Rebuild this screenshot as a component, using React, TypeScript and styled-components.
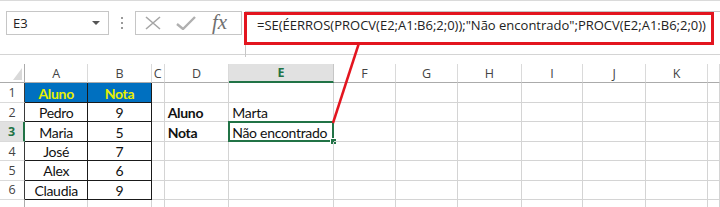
import React from "react";
import styled, { createGlobalStyle, css } from "styled-components";

const GlobalStyle = createGlobalStyle`
  html, body { margin: 0; padding: 0; background: #ffffff; }
  body { width: 720px; height: 207px; overflow: hidden; font-family: "Open Sans", "Noto Sans", sans-serif; }
`;

const Page = styled.div`
  position: relative;
  width: 720px;
  height: 207px;
  overflow: hidden;
  background: #ffffff;
  display: flex;
  flex-direction: column;
`;

const FormulaArea = styled.div`
  height: 55px;
  border-top: 1px solid #dadada;
  border-bottom: 1px solid #d4d4d4;
  box-sizing: border-box;
  display: flex;
  align-items: flex-start;
  padding: 10px 0 0 6px;
  flex-shrink: 0;
`;

const NameBox = styled.div`
  width: 103px;
  height: 24px;
  box-sizing: border-box;
  border: 1px solid #c6c6c6;
  display: flex;
  align-items: center;
  justify-content: space-between;
  padding: 0 8px 0 6px;
  font-family: "Open Sans", "Noto Sans", sans-serif;
  font-size: 13px;
  color: #222;
`;

const DropCaret = styled.span`
  width: 0;
  height: 0;
  border-left: 4px solid transparent;
  border-right: 4px solid transparent;
  border-top: 4px solid #555;
`;

const Grip = styled.div`
  width: 26px;
  height: 24px;
  display: flex;
  flex-direction: column;
  align-items: center;
  justify-content: center;
  gap: 3px;
  & > span {
    width: 2px;
    height: 2px;
    background: #9a9a9a;
  }
`;

const FxBox = styled.div`
  width: 107px;
  height: 24px;
  box-sizing: border-box;
  border: 1px solid #c6c6c6;
  display: flex;
  align-items: center;
  padding-left: 8px;
  gap: 14px;
`;

const FxLabel = styled.span`
  font-family: "Liberation Serif", "DejaVu Serif", serif;
  font-style: italic;
  font-size: 21px;
  color: #707070;
  line-height: 1;
  margin-left: 2px;
  margin-top: -2px;
`;

const FormulaBox = styled.div`
  margin-left: 3px;
  flex: 1;
  height: 46px;
  box-sizing: border-box;
  border: 1px solid #c6c6c6;
  border-right: none;
  border-bottom: none;
  position: relative;
  padding: 4px 0 0 11px;
  font-family: "Open Sans", "Noto Sans", sans-serif;
  font-size: 13px;
  color: #222;
  white-space: nowrap;
`;

const RedFrame = styled.div`
  position: absolute;
  left: -2px;
  top: 0px;
  width: 470px;
  height: 33px;
  box-sizing: border-box;
  border: 3px solid #e3151f;
  pointer-events: none;
`;

const Arrow = styled.svg`
  position: absolute;
  left: 0;
  top: 0;
  pointer-events: none;
`;

const Sheet = styled.div`
  padding-top: 9px;
  display: grid;
  grid-template-columns: 25px 63.3px 63.4px 13px 64.6px 104.7px 62px 62.3px 63.4px 61.6px 62.7px 62.3px 1fr;
  grid-template-rows: 19.3px 20px 19px 20px 19px 19.4px 19.3px 20px;
`;

const Corner = styled.div`
  border-right: 1px solid #ababab;
  border-bottom: 1px solid #ababab;
  display: flex;
  align-items: flex-end;
  justify-content: flex-end;
  padding: 0 2px 2px 0;
`;

const ColHeader = styled.div<{ $active?: boolean }>`
  box-sizing: border-box;
  border-right: 1px solid #dadada;
  border-bottom: 1px solid #ababab;
  display: flex;
  align-items: center;
  justify-content: center;
  font-family: "Open Sans", "Noto Sans", sans-serif;
  font-size: 12.5px;
  color: #444;
  ${(p) =>
    p.$active &&
    css`
      background: #e1e1e1;
      color: #217346;
      font-weight: 700;
      border-bottom: 2px solid #217346;
      border-right-color: #c6c6c6;
    `}
`;

const RowHeader = styled.div<{ $active?: boolean; $edge?: string }>`
  box-sizing: border-box;
  border-right: 1px solid ${(p) => p.$edge || "#ababab"};
  border-bottom: 1px solid #dadada;
  display: flex;
  align-items: center;
  justify-content: center;
  font-family: "Open Sans", "Noto Sans", sans-serif;
  font-size: 12.5px;
  color: #444;
  ${(p) =>
    p.$active &&
    css`
      background: #e1e1e1;
      color: #217346;
      font-weight: 700;
      border-right: 2px solid #217346;
    `}
`;

const Cell = styled.div<{
  $align?: "left" | "center";
  $bold?: boolean;
  $head?: boolean;
  $boxed?: boolean;
  $selected?: boolean;
}>`
  position: relative;
  box-sizing: border-box;
  border-right: 1px solid ${(p) => (p.$boxed ? "#1a1a1a" : "#d4d4d4")};
  border-bottom: 1px solid ${(p) => (p.$boxed ? "#1a1a1a" : "#d4d4d4")};
  display: flex;
  align-items: center;
  justify-content: ${(p) => (p.$align === "center" ? "center" : "flex-start")};
  padding: 1px 0 0 ${(p) => (p.$align === "center" ? "0" : "3px")};
  font-family: "Lato", "Liberation Sans", sans-serif;
  font-size: 14px;
  letter-spacing: -0.3px;
  font-weight: ${(p) => (p.$bold ? 700 : 400)};
  color: #111;
  white-space: nowrap;
  ${(p) =>
    p.$head &&
    css`
      background: #0070c0;
      color: #e8f000;
      font-weight: 700;
    `}
  ${(p) =>
    p.$selected &&
    css`
      &::before {
        content: "";
        position: absolute;
        left: -1px;
        top: -1px;
        right: -1px;
        bottom: -1px;
        border: 2px solid #217346;
      }
      &::after {
        content: "";
        position: absolute;
        right: -4px;
        bottom: -4px;
        width: 5px;
        height: 5px;
        background: #217346;
        border: 1px solid #fff;
      }
    `}
`;

const columns = ["A", "B", "C", "D", "E", "F", "G", "H", "I", "J", "K", ""];

type CellDef = { text?: string; align?: "left" | "center"; bold?: boolean; head?: boolean; boxed?: boolean; selected?: boolean };

const tableData: [string, string][] = [
  ["Aluno", "Nota"],
  ["Pedro", "9"],
  ["Maria", "5"],
  ["José", "7"],
  ["Alex", "6"],
  ["Claudia", "9"],
];

function rowCells(r: number): CellDef[] {
  const cells: CellDef[] = [];
  const t = tableData[r - 1];
  if (t) {
    cells.push({ text: t[0], align: "center", head: r === 1, boxed: true });
    cells.push({ text: t[1], align: "center", head: r === 1, boxed: true });
  } else {
    cells.push({}, {});
  }
  cells.push({});
  if (r === 2) {
    cells.push({ text: "Aluno", bold: true });
    cells.push({ text: "Marta" });
  } else if (r === 3) {
    cells.push({ text: "Nota", bold: true });
    cells.push({ text: "Não encontrado", selected: true });
  } else {
    cells.push({}, {});
  }
  for (let i = 0; i < 7; i++) cells.push({});
  return cells;
}

export default function App() {
  const rows = [1, 2, 3, 4, 5, 6, 7];
  return (
    <Page>
      <GlobalStyle />
      <FormulaArea>
        <NameBox>
          <span>E3</span>
          <DropCaret />
        </NameBox>
        <Grip>
          <span />
          <span />
          <span />
        </Grip>
        <FxBox>
          <svg width="18" height="14" viewBox="0 0 18 14">
            <path d="M2 1 L16 13 M16 1 L2 13" stroke="#a6a6a6" strokeWidth="1.6" fill="none" />
          </svg>
          <svg width="20" height="14" viewBox="0 0 20 14">
            <path d="M1 8 L7 13 L19 1" stroke="#b0b0b0" strokeWidth="2.4" fill="none" />
          </svg>
          <FxLabel>fx</FxLabel>
        </FxBox>
        <FormulaBox>
          {'=SE(ÉERROS(PROCV(E2;A1:B6;2;0));"Não encontrado";PROCV(E2;A1:B6;2;0))'}
          <RedFrame />
        </FormulaBox>
      </FormulaArea>
      <Sheet>
        <Corner>
          <svg width="9" height="12" viewBox="0 0 9 12">
            <polygon points="9,0 9,12 0,12" fill="#d9d9d9" />
          </svg>
        </Corner>
        {columns.map((c) => (
          <ColHeader key={c || "end"} $active={c === "E"}>
            {c}
          </ColHeader>
        ))}
        {rows.map((r) => (
          <React.Fragment key={r}>
            <RowHeader $active={r === 3} $edge={r <= 6 ? "#3a3a3a" : undefined}>
              {r <= 6 ? r : ""}
            </RowHeader>
            {rowCells(r).map((c, i) => (
              <Cell
                key={i}
                $align={c.align}
                $bold={c.bold}
                $head={c.head}
                $boxed={c.boxed}
                $selected={c.selected}
              >
                {c.text}
              </Cell>
            ))}
          </React.Fragment>
        ))}
      </Sheet>
      <Arrow width="720" height="207" viewBox="0 0 720 207">
        <line x1="359" y1="43" x2="333" y2="123" stroke="#e3151f" strokeWidth="2.5" />
      </Arrow>
    </Page>
  );
}
